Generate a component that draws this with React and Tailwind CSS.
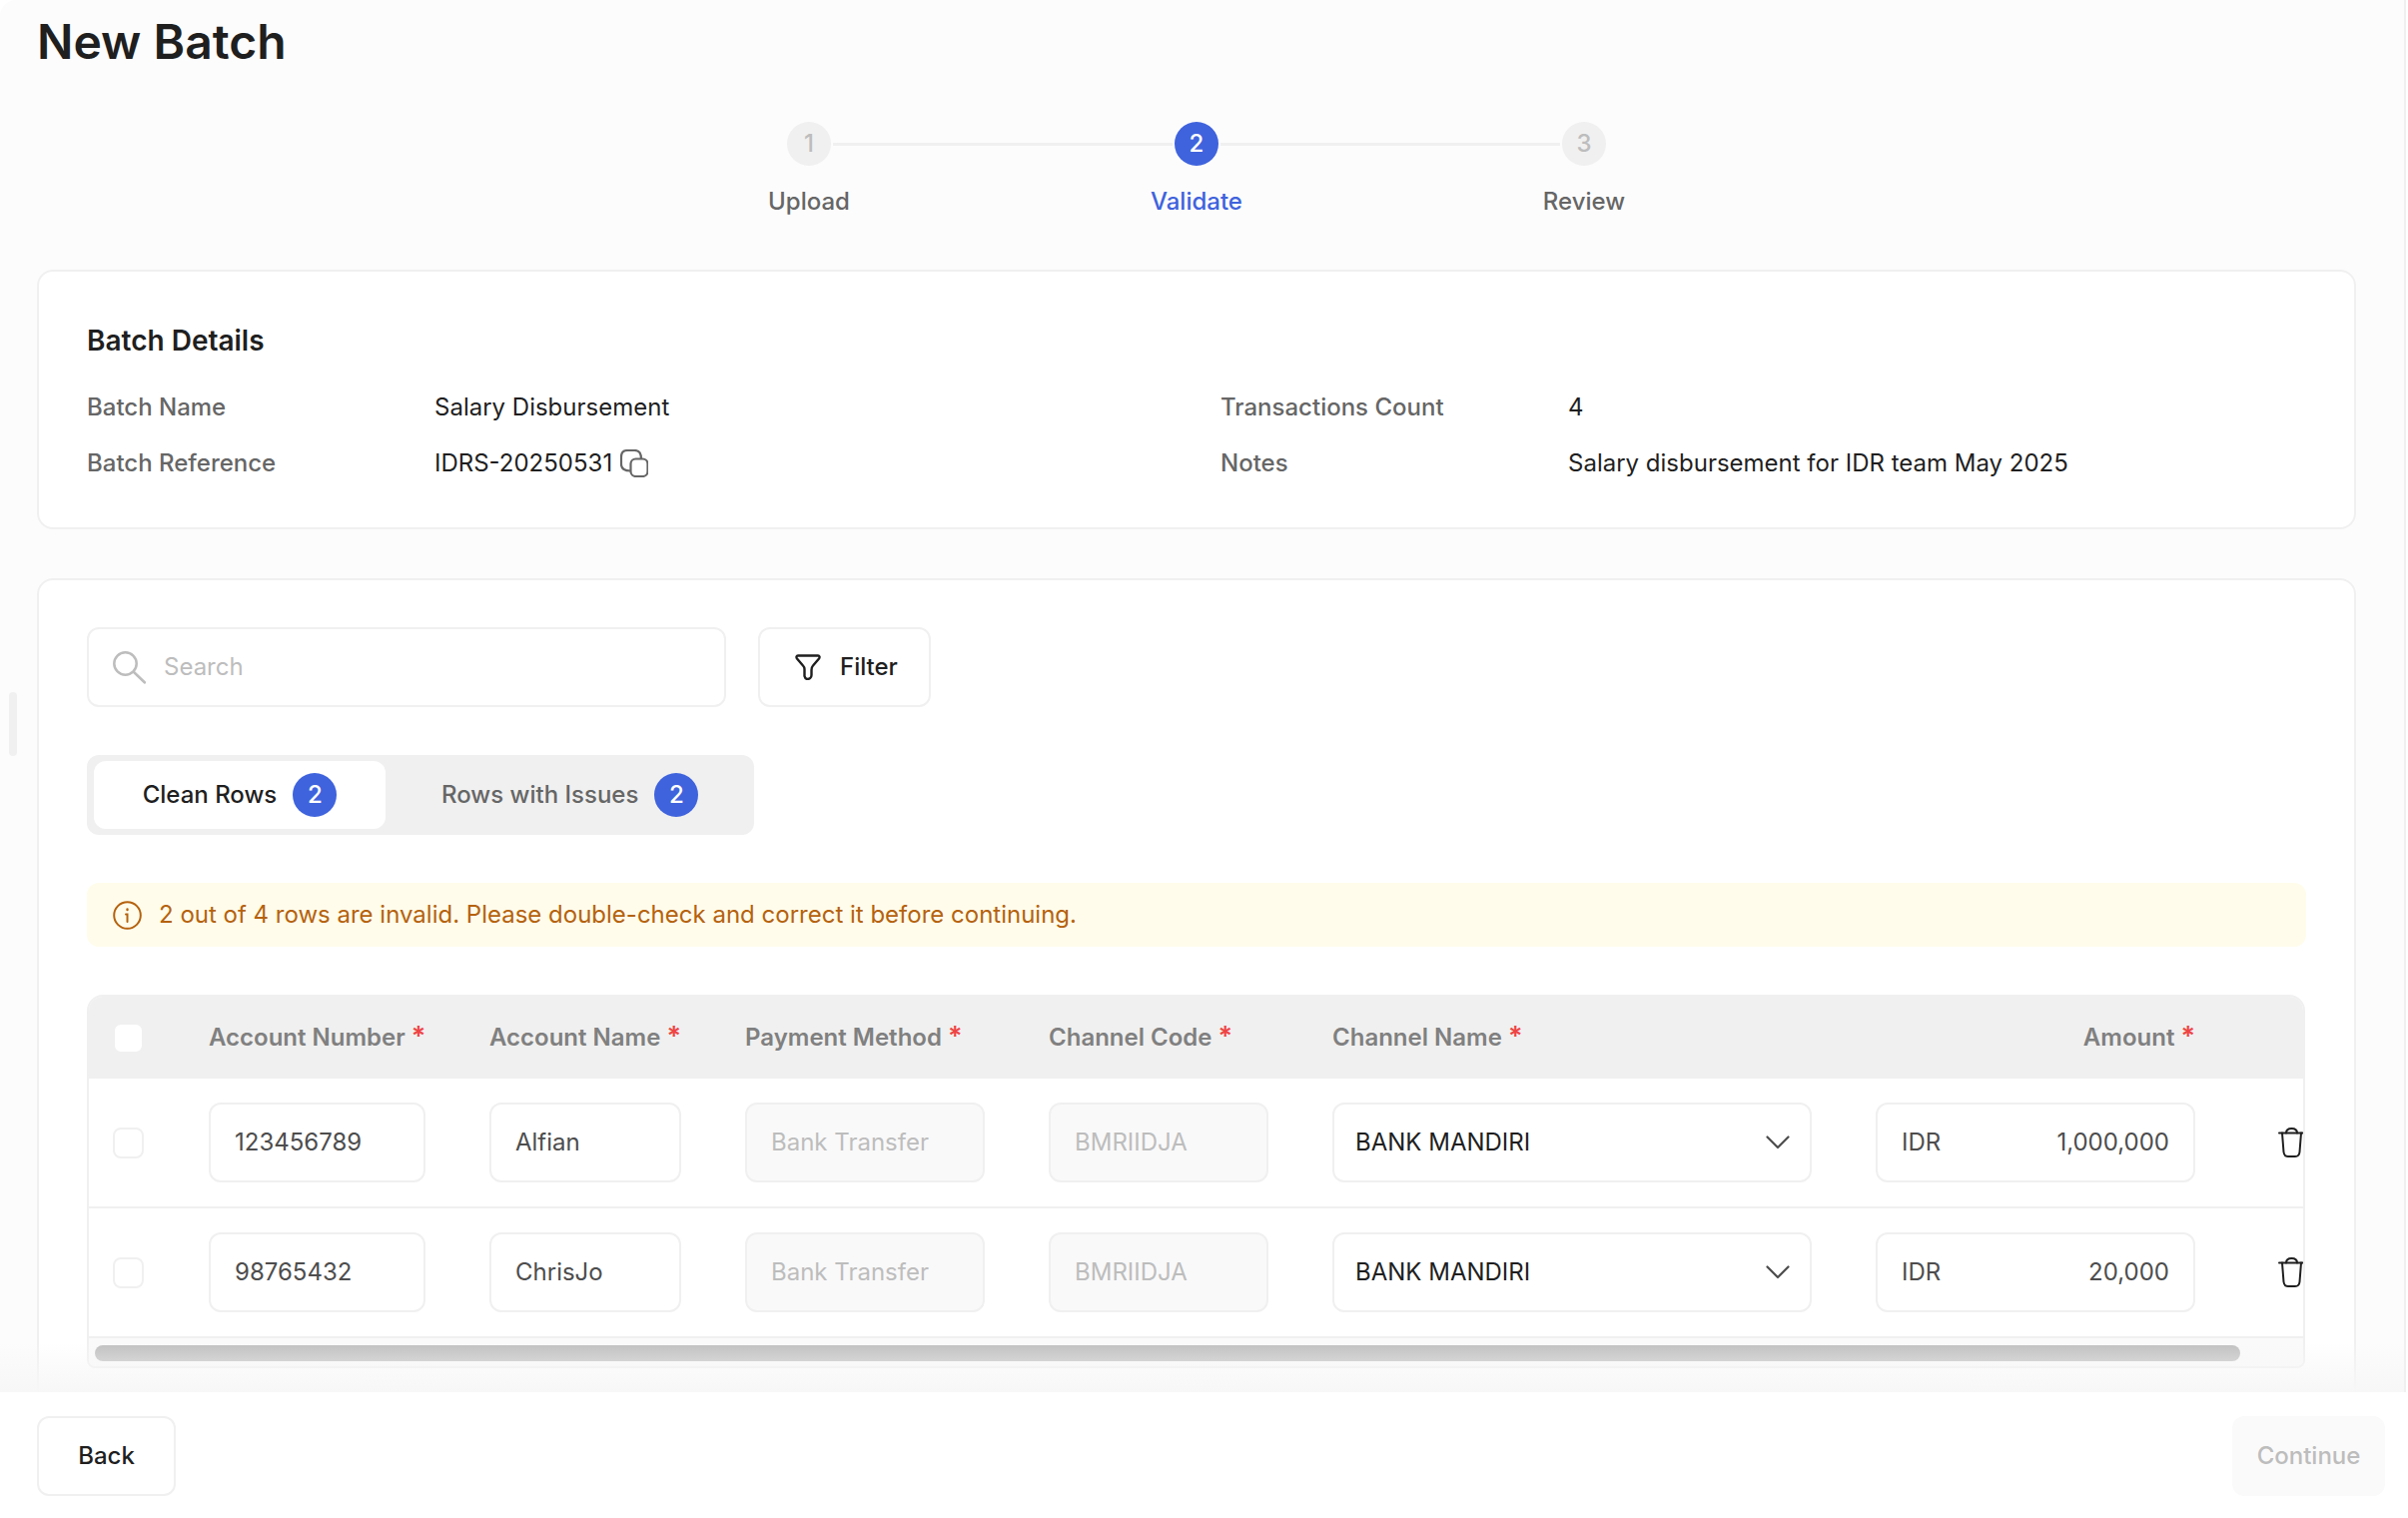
const rowGrid = 'grid grid-cols-[32px_217px_192px_240px_220px_480px_320px_27px] gap-x-[64px] items-center pl-[24px]';

const rows = [
  { number: '123456789', name: 'Alfian', amount: '1,000,000' },
  { number: '98765432', name: 'ChrisJo', amount: '20,000' },
];

const SearchIcon = () => (
  <svg width="33" height="33" viewBox="0 0 33 33" fill="none" stroke="#bdbdbd" strokeWidth="2.5" strokeLinecap="round">
    <circle cx="12.5" cy="12.5" r="11.2" />
    <path d="M21 21L32 31.5" />
  </svg>
);

const FilterIcon = () => (
  <svg width="26" height="26" viewBox="0 0 26 26" fill="none" stroke="#1f1f1f" strokeWidth="2.4" strokeLinejoin="round">
    <path d="M3 1.5H23C24.5 1.5 25 3 24 4.5L18 11.5C16.5 13 16.5 14 16.5 16V21C16.5 23.5 14.5 25 12.5 25C11 25 10 24 9.5 22V15C9.5 13 9 12.5 8 11.5L2 4.5C1 3 1.5 1.5 3 1.5Z" />
  </svg>
);

const CopyIcon = () => (
  <svg width="28" height="28" viewBox="0 0 28 28" fill="none" stroke="#666666" strokeWidth="2.2" className="shrink-0">
    <rect x="10.5" y="9.5" width="17" height="17.5" rx="5" />
    <path d="M10.5 21.5C4 21.5 1 19 1 15V7.5C1 3 3.5 1 7.5 1H14.5C18.5 1 21 3.5 21 9.5" />
  </svg>
);

const InfoIcon = () => (
  <svg width="29" height="29" viewBox="0 0 29 29" fill="none" stroke="#b5620e" strokeWidth="2" strokeLinecap="round" className="shrink-0">
    <circle cx="14.5" cy="14.5" r="13.3" />
    <path d="M13 13.5H14.5V21" />
    <path d="M14.5 8.5V9" strokeWidth="2.4" />
  </svg>
);

const TrashIcon = () => (
  <svg width="27" height="30" viewBox="0 0 27 30" fill="none" stroke="#1f1f1f" strokeWidth="2" strokeLinecap="round" strokeLinejoin="round">
    <path d="M1 5.5H26" />
    <path d="M8 5.5C8 2.5 10 1 13.5 1S19 2.5 19 5.5" />
    <path d="M4 5.5L5.5 24.5C5.8 27.5 7.5 29 10 29H17C19.5 29 21.2 27.5 21.5 24.5L23 5.5" />
  </svg>
);

const ChevronIcon = () => (
  <svg width="24" height="14" viewBox="0 0 24 14" fill="none" stroke="#4d4d4d" strokeWidth="2.2" strokeLinecap="round" strokeLinejoin="round">
    <path d="M1.5 1.5L12 12L22.5 1.5" />
  </svg>
);

const Step = ({ n, active }) => (
  <div className={`w-[44px] h-[44px] rounded-full flex items-center justify-center text-[24px] font-medium ${active ? 'bg-[#3f63dd] text-white' : 'bg-[#f0f0f0] text-[#bdbdbd]'}`}>
    {n}
  </div>
);

const Head = ({ children, right }) => (
  <div className={`text-[24px] leading-[32px] font-semibold text-[#808080] whitespace-nowrap ${right ? 'text-right' : ''}`}>
    {children} <span className="text-[27px] leading-[20px] text-[#ef4444]">*</span>
  </div>
);

const Field = ({ children, disabled }) => (
  <div className={`h-[80px] rounded-[12px] border-2 border-[#f0f0f0] px-[24px] flex items-center text-[24px] ${disabled ? 'bg-[#f9f9f9] text-[#bdbdbd]' : 'bg-white text-[#4d4d4d]'}`}>
    {children}
  </div>
);

const Checkbox = () => (
  <div className="w-[31px] h-[31px] rounded-[8px] border-2 border-[#f0f0f0] bg-white" />
);

const Badge = () => (
  <span className="w-[44px] h-[44px] rounded-full bg-[#3f63dd] text-white text-[24px] font-medium flex items-center justify-center">2</span>
);

const Detail = ({ label, children }) => (
  <div className="flex items-center h-[36px]">
    <div className="w-[348px] text-[#666666] font-medium">{label}</div>
    <div className="flex items-center gap-[8px] text-[#1f1f1f]">{children}</div>
  </div>
);

export default function App() {
  return (
    <div className="w-[2411px] h-[1520px] bg-white flex flex-col overflow-hidden font-['Inter',sans-serif] text-[24px] leading-[36px]">
      <main className="relative w-[2409px] h-[1394px] shrink-0 overflow-hidden bg-[#fcfcfc] border-r-2 border-[#f0f0f0] rounded-tl-[16px] px-[37px]">
        <div className="absolute left-[9px] top-[693px] w-[8px] h-[64px] rounded-full bg-[#f0f0f0]" />

        <h1 className="pt-[12px] text-[48px] leading-[60px] font-semibold text-[#1f1f1f]">New Batch</h1>

        <div className="mt-[50px] w-[2322px] flex justify-center items-center">
          <Step n="1" />
          <div className="w-[340px] h-[3px] mx-[2px] bg-[#f0f0f0]" />
          <Step n="2" active />
          <div className="w-[340px] h-[3px] mx-[2px] bg-[#f0f0f0]" />
          <Step n="3" />
        </div>
        <div className="mt-[18px] w-[2322px] flex justify-center text-center font-medium text-[#666666]">
          <div className="w-[388px]">Upload</div>
          <div className="w-[388px] text-[#3f63dd]">Validate</div>
          <div className="w-[388px]">Review</div>
        </div>

        {/* Batch details */}
        <section className="mt-[50px] w-[2322px] h-[260px] rounded-[16px] border-2 border-[#f0f0f0] bg-white p-[48px]">
          <h2 className="text-[28px] leading-[42px] font-semibold text-[#1f1f1f]">Batch Details</h2>
          <div className="mt-[28px] grid grid-cols-[1135px_1fr] gap-y-[20px]">
            <Detail label="Batch Name">Salary Disbursement</Detail>
            <Detail label="Transactions Count">4</Detail>
            <Detail label="Batch Reference">IDRS-20250531 <CopyIcon /></Detail>
            <Detail label="Notes">Salary disbursement for IDR team May 2025</Detail>
          </div>
        </section>

        {/* Validation rows */}
        <section className="mt-[49px] w-[2322px] h-[900px] rounded-[16px] border-2 border-[#f0f0f0] bg-white px-[48px] pt-[47px]">
          <div className="flex gap-[32px]">
            <div className="w-[640px] h-[80px] rounded-[12px] border-2 border-[#f0f0f0] bg-white pl-[24px] flex items-center gap-[18px] text-[#bdbdbd]">
              <SearchIcon />
              Search
            </div>
            <button className="w-[173px] h-[80px] rounded-[12px] border-2 border-[#f0f0f0] bg-white flex items-center pl-[35px] gap-[19px] font-medium text-[#1f1f1f]">
              <FilterIcon />
              Filter
            </button>
          </div>

          <div className="mt-[48px] w-[668px] h-[80px] rounded-[12px] bg-[#f0f0f0] flex items-center gap-[8px] px-[7px] font-medium">
            <div className="w-[292px] h-[68px] rounded-[12px] bg-white flex items-center justify-center gap-[16px] text-[#1f1f1f]">
              Clean Rows <Badge />
            </div>
            <div className="h-[68px] px-[48px] rounded-[12px] flex items-center gap-[16px] text-[#666666] whitespace-nowrap">
              Rows with Issues <Badge />
            </div>
          </div>

          <div className="mt-[48px] h-[64px] rounded-[12px] bg-[#fffceb] pl-[26px] flex items-center gap-[17px] text-[#b5620e]">
            <InfoIcon />
            2 out of 4 rows are invalid. Please double-check and correct it before continuing.
          </div>

          <div className="mt-[48px] w-[2221px] rounded-t-[16px] rounded-b-[8px] border-2 border-[#f0f0f0] overflow-hidden">
            <div className={`${rowGrid} h-[82px] bg-[#f0f0f0]`}>
              <Checkbox />
              <Head>Account Number</Head>
              <Head>Account Name</Head>
              <Head>Payment Method</Head>
              <Head>Channel Code</Head>
              <Head>Channel Name</Head>
              <Head right>Amount</Head>
              <div />
            </div>
            {rows.map((row) => (
              <div key={row.number} className={`${rowGrid} h-[130px] border-b-2 border-[#f0f0f0] bg-white`}>
                <Checkbox />
                <Field>{row.number}</Field>
                <Field>{row.name}</Field>
                <Field disabled>Bank Transfer</Field>
                <Field disabled>BMRIIDJA</Field>
                <div className="h-[80px] rounded-[12px] border-2 border-[#f0f0f0] bg-white pl-[21px] pr-[20px] flex items-center justify-between text-[#1f1f1f]">
                  BANK MANDIRI
                  <ChevronIcon />
                </div>
                <Field>
                  <div className="w-full flex justify-between">
                    <span>IDR</span>
                    <span>{row.amount}</span>
                  </div>
                </Field>
                <button className="ml-[19px]">
                  <TrashIcon />
                </button>
              </div>
            ))}
            <div className="h-[28px] bg-[#fafafa] pl-[6px] pt-[7px]">
              <div className="w-[2148px] h-[16px] rounded-full bg-[#bfbfbf]" />
            </div>
          </div>
        </section>

        <div className="absolute left-0 right-0 bottom-0 h-[50px] bg-linear-to-b from-transparent to-[#f7f7f7]" />
      </main>

      <footer className="flex-1 bg-white flex justify-between pl-[37px] pr-[23px] pt-[24px]">
        <button className="w-[139px] h-[80px] rounded-[12px] border-2 border-[#f0f0f0] bg-white font-medium text-[#1f1f1f]">Back</button>
        <button className="w-[153px] h-[80px] rounded-[12px] bg-[#fafafa] font-medium text-[#bdbdbd]">Continue</button>
      </footer>
    </div>
  );
}
